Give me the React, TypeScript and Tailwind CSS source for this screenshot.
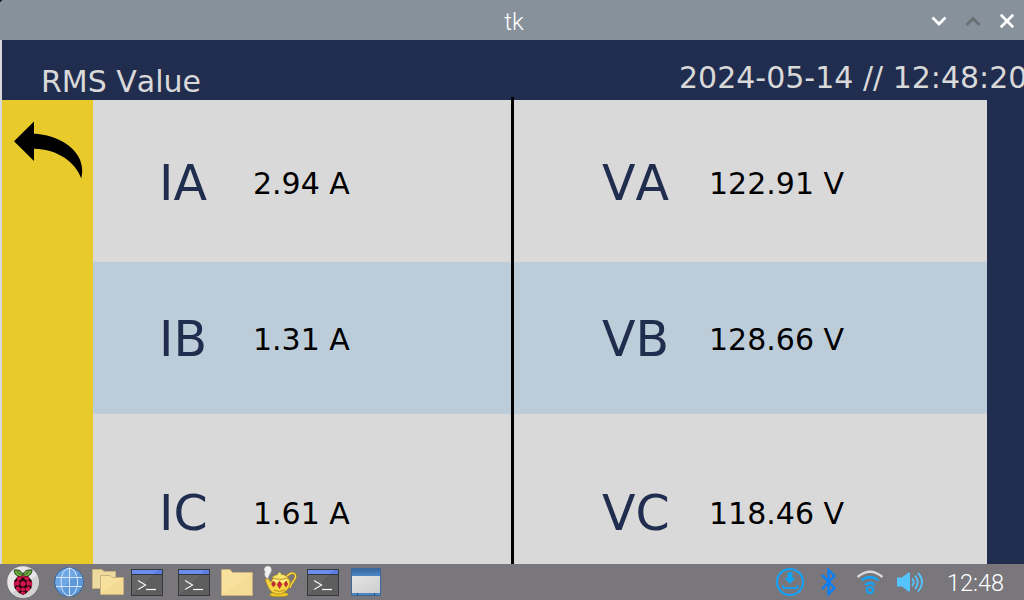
import React from 'react';

type Reading = { label: string; value: string };

const currents: Reading[] = [
  { label: 'IA', value: '2.94 A' },
  { label: 'IB', value: '1.31 A' },
  { label: 'IC', value: '1.61 A' },
];
const voltages: Reading[] = [
  { label: 'VA', value: '122.91 V' },
  { label: 'VB', value: '128.66 V' },
  { label: 'VC', value: '118.46 V' },
];

const rowStyles = ['h-[162px] bg-[#d9d9d9] pt-[56px]', 'h-[152px] bg-[#bdccd9] pt-[50px]', 'h-[150px] bg-[#d9d9d9] pt-[72px]'];

function ReadingCell({ reading, side }: { reading: Reading; side: 'left' | 'right' }) {
  return (
    <div className={side === 'left' ? 'flex w-[418px] pl-[66px]' : 'flex w-[476px] pl-[91px]'}>
      <span className={side === 'left' ? 'w-[94px] text-[49px] leading-[56px] text-[#212d4e]' : 'w-[107px] text-[49px] leading-[56px] text-[#212d4e]'}>
        {reading.label}
      </span>
      <span className="pt-[10px] text-[30px] leading-[36px] text-black">{reading.value}</span>
    </div>
  );
}

function BackArrow() {
  return (
    <svg className="ml-[12px] mt-[21px] block" width="70" height="60" viewBox="14 121 70 60">
      <path d="M14 141.300L34 121.500V133.700C60 134.500 88 152 81.200 178.500C76 163 58 149 34 148.800V161Z" fill="#000" />
    </svg>
  );
}

function WindowButtons() {
  return (
    <svg className="block" width="94" height="40" viewBox="930 0 94 40" fill="none" strokeWidth="2.700">
      <path d="M932.500 17.500L939 24L945.500 17.500" stroke="#fff" />
      <path d="M966.500 25L973 18.500L979.500 25" stroke="#6b6f72" />
      <path d="M1000.800 14.800L1013.200 27.200M1013.200 14.800L1000.800 27.200" stroke="#fff" />
    </svg>
  );
}

function Raspberry() {
  return (
    <svg width="34" height="36" viewBox="6 564 34 36">
      <circle cx="23" cy="582" r="15.800" fill="#e7e7e7" />
      <path d="M12 593A15.800 15.800 0 0 0 38.800 582L37 575Z" fill="#d2d2d2" />
      <path d="M22.600 577C17 577 14 574 14.300 570C19 569.500 22.500 571 22.800 576C23.500 571 27 569.500 32 570C32 574 29 577 22.600 577Z" fill="#6cae3e" stroke="#213417" strokeWidth="1" />
      <path d="M17 571.500L22 575.500M29 571.500L24 575.500" stroke="#294c20" strokeWidth=".7" />
      <path d="M18 576L28 576L32 581L31.500 588L26 593.500L23 595L19 593L14.500 588L14 581Z" fill="#260510" />
      <g fill="#ce1748">
        <ellipse cx="19.200" cy="578.500" rx="2.600" ry="1.900" transform="rotate(-28 19.200 578.500)" />
        <ellipse cx="26.800" cy="578.500" rx="2.600" ry="1.900" transform="rotate(28 26.800 578.500)" />
        <circle cx="23" cy="583.800" r="2.700" />
        <ellipse cx="17.600" cy="583.200" rx="2" ry="2.600" />
        <ellipse cx="28.400" cy="583.200" rx="2" ry="2.600" />
        <ellipse cx="14.800" cy="583.800" rx="1.100" ry="2.600" />
        <ellipse cx="31.200" cy="583.800" rx="1.100" ry="2.600" />
        <ellipse cx="18.200" cy="589" rx="2.600" ry="2.100" transform="rotate(35 18.200 589)" />
        <ellipse cx="27.800" cy="589" rx="2.600" ry="2.100" transform="rotate(-35 27.800 589)" />
        <ellipse cx="23" cy="589.500" rx="2.200" ry="1.900" />
        <ellipse cx="23" cy="593" rx="2.400" ry="1.200" />
        <ellipse cx="23" cy="576.500" rx="2" ry="1" />
      </g>
    </svg>
  );
}

function Globe() {
  return (
    <svg width="32" height="36" viewBox="53 564 32 36">
      <circle cx="69" cy="582" r="14.500" fill="#6fa6e4" stroke="#356194" />
      <path d="M58.800 592A14.300 14.300 0 0 0 79.200 572Z" fill="#5f98d9" />
      <g fill="none" stroke="#d3e5fa" strokeWidth="1">
        <path d="M69.500 568V596M56 577.500H82M56 586.500H82" />
        <ellipse cx="69.300" cy="582" rx="8.300" ry="14" />
      </g>
    </svg>
  );
}

function FolderPair() {
  return (
    <svg width="32" height="36" viewBox="92 564 32 36" stroke="#c9b17e">
      <path d="M92.500 569.500H102L104 571.500H115.500V588.500H92.500Z" fill="#edda9f" />
      <path d="M100.500 575.500H110L112 577.500H123.500V594.500H100.500Z" fill="#f7e09c" />
      <path d="M101 594L123 578V594Z" fill="#f3da94" stroke="none" />
    </svg>
  );
}

function Terminal() {
  return (
    <svg width="32" height="36" viewBox="0 0 32 36">
      <rect x=".5" y="5.500" width="31" height="26" fill="#5d5d5d" stroke="#393939" />
      <path d="M1 11H22L1 31Z" fill="#666" />
      <path d="M1 6H31V10H1Z" fill="#5c7ce5" />
      <path d="M1 6H27L23 10H1Z" fill="#6d8cf0" />
      <path d="M1 10.500H31" stroke="#30343d" />
      <path d="M7 16.500L14.500 21L7 25.500" fill="none" stroke="#eee" strokeWidth="1.300" />
      <path d="M15 25.500H25" stroke="#fff" strokeWidth="1.200" />
    </svg>
  );
}

function Folder() {
  return (
    <svg width="33" height="36" viewBox="220 564 33 36">
      <path d="M221.500 569.500H230L232.500 572.500H252.500V595.500H221.500Z" fill="#f8e19d" stroke="#c9b17e" />
      <path d="M222 595L252 573V595Z" fill="#f5dc96" />
    </svg>
  );
}

function Teapot() {
  return (
    <svg width="34" height="36" viewBox="263 564 34 36">
      <path d="M268 579C262 574 267 573 264.500 570C264 566 270 565 271 568.500C272 573 267.500 575 268 579Z" fill="#f1f1f1" stroke="#ddd" strokeWidth=".7" />
      <path d="M287 576C291 572 296 572 295.500 577C295 581 290 583 290 588" fill="none" stroke="#9b7d22" strokeWidth="2.800" />
      <path d="M287 576C291 572 296 572 295.500 577C295 581 290 583 290 588" fill="none" stroke="#f5d64d" strokeWidth="1.500" />
      <ellipse cx="279" cy="594.500" rx="9.500" ry="2.300" fill="#f1cc26" stroke="#9f831f" strokeWidth=".7" />
      <path d="M265 579L269 579C270 582 271 583 272 580C274 575 286 574 289 579C293 586 286 592 281 594H276C270 592 268 588 265 579Z" fill="#f6d443" stroke="#a88518" strokeWidth=".8" />
      <path d="M272 578C275 573 285 573 288 578Q280 581 272 578Z" fill="#f8e56c" stroke="#a78116" strokeWidth=".7" />
      <circle cx="279.500" cy="574" r="1.600" fill="#fae676" />
      <path d="M273 580Q280 583 287 580" fill="none" stroke="#fff3a8" strokeWidth="1.500" />
      <path d="M273.500 581L275.500 584L273.500 587L271.500 584ZM279.500 581L282 584.500L279.500 588.500L277.200 584.500ZM286 581L287.700 584L286 587L284.200 584Z" fill="#cd203d" stroke="#892a15" strokeWidth=".5" />
      <path d="M274 590Q279 593 285 590" stroke="#b98d17" fill="none" />
    </svg>
  );
}

function AppWindow() {
  return (
    <svg width="32" height="36" viewBox="350 564 32 36">
      <defs>
        <linearGradient id="winbar" x1="0" y1="0" x2="0" y2="1">
          <stop stopColor="#36699f" /><stop offset="1" stopColor="#4d88c8" />
        </linearGradient>
        <linearGradient id="winbody" x1="0" y1="0" x2="1" y2="1">
          <stop stopColor="#e5e5e5" /><stop offset="1" stopColor="#cdcdcd" />
        </linearGradient>
      </defs>
      <rect x="351" y="568" width="30" height="28" rx="1" fill="#3c689b" />
      <rect x="352" y="569" width="28" height="7" fill="url(#winbar)" />
      <rect x="352" y="576" width="28" height="17" fill="url(#winbody)" />
      <path d="M352 594H380" stroke="#4d86c1" strokeWidth="2" />
      <path d="M357.500 593V596M374.500 593V596" stroke="#294f79" />
    </svg>
  );
}

function StatusIcons() {
  return (
    <svg width="150" height="36" viewBox="776 564 150 36">
      <g fill="none" stroke="#11a3f8">
        <circle cx="790" cy="582" r="13" strokeWidth="2" />
        <path d="M783 585V588.200H797.500V585" strokeWidth="1.700" />
      </g>
      <path d="M787.500 572H792.500V578H795.500L790 584L784.500 578H787.500Z" fill="#11a3f8" />
      <path d="M822 575L834.500 588L828.500 594V570L834.500 576L822 589" fill="none" stroke="#087ffa" strokeWidth="2.300" />
      <g fill="none">
        <path d="M857.500 577Q870 566.500 882.500 577" stroke="#d9d9db" strokeWidth="2.300" />
        <path d="M861.500 580.500Q870 573.500 878.500 580.500M865 585Q870 581 875 585" stroke="#11a3f8" strokeWidth="2.200" />
        <circle cx="870" cy="590" r="3" stroke="#11a3f8" strokeWidth="2.200" />
      </g>
      <path d="M897 577.500H902L908.500 572.500Q910 572 910 573.500V590.500Q910 592 908.500 591.500L902 586.500H897Z" fill="#55c4fc" />
      <path d="M912 578.500Q915.500 582 912 586M915 575.500Q920.500 582 915 589M918 573Q926 582 918 591.500" fill="none" stroke="#55c4fc" strokeWidth="1.900" />
    </svg>
  );
}

export default function App() {
  return (
    <div className="flex h-[600px] w-[1024px] flex-col overflow-hidden bg-[#212d4e] font-['DejaVu_Sans',sans-serif] [font-kerning:none]">
      <header className="grid h-[40px] shrink-0 grid-cols-[94px_1fr_94px] bg-[#87919b]">
        <svg width="2" height="2" viewBox="0 0 2 2"><path d="M0 0H2V1H1V2H0Z" fill="#18242f" /></svg>
        <div className="pt-[2px] pl-[4px] text-center font-[Roboto,sans-serif] text-[24px] leading-[40px] font-light text-white">tk</div>
        <WindowButtons />
      </header>

      <main className="flex h-[524px] shrink-0 flex-col border-l-2 border-[#d9d9d9]">
        <div className="flex h-[60px] shrink-0 justify-between pl-[39px] text-[30px] leading-[36px] whitespace-nowrap text-[#d9d9d9]">
          <h1 className="pt-[24px]">RMS Value</h1>
          <time className="w-[345px] pt-[20px]">2024-05-14 // 12:48:20</time>
        </div>
        <div className="flex h-[464px]">
          <aside className="w-[91px] bg-[#e8cb2a]">
            <BackArrow />
          </aside>
          <section className="relative w-[894px]">
            {currents.map((current, i) => (
              <div key={current.label} className={`flex ${rowStyles[i]}`}>
                <ReadingCell reading={current} side="left" />
                <ReadingCell reading={voltages[i]} side="right" />
              </div>
            ))}
            <div className="absolute -top-[3px] bottom-0 left-[418px] w-[3px] bg-black" />
          </section>
        </div>
      </main>

      <footer className="flex h-[36px] shrink-0 justify-between bg-[#79777c] pl-[6px]">
        <nav className="flex">
          <Raspberry />
          <div className="ml-[13px]"><Globe /></div>
          <div className="ml-[7px]"><FolderPair /></div>
          <div className="ml-[7px]"><Terminal /></div>
          <div className="ml-[15px]"><Terminal /></div>
          <div className="ml-[10px]"><Folder /></div>
          <div className="ml-[10px]"><Teapot /></div>
          <div className="ml-[10px]"><Terminal /></div>
          <div className="ml-[11px]"><AppWindow /></div>
        </nav>
        <div className="flex w-[248px]">
          <StatusIcons />
          <span className="pt-[1px] pl-[21px] font-[Roboto,sans-serif] text-[23.5px] leading-[36px] font-light text-white">12:48</span>
        </div>
      </footer>
    </div>
  );
}
